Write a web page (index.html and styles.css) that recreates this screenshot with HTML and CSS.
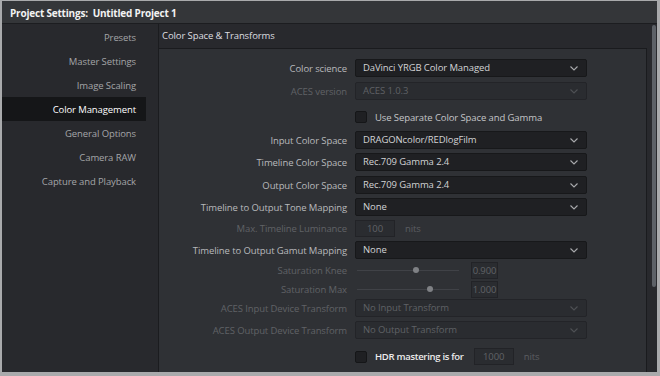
FILE: index.html
```html
<!DOCTYPE html>
<html>
<head>
<meta charset="utf-8">
<link rel="stylesheet" href="styles.css">
</head>
<body>
<div class="window">
  <div class="titlebar">Project Settings:&nbsp; Untitled Project 1</div>
  <div class="body">
    <nav class="sidebar">
      <div class="nav-item">Presets</div>
      <div class="nav-item">Master Settings</div>
      <div class="nav-item">Image Scaling</div>
      <div class="nav-item active">Color Management</div>
      <div class="nav-item">General Options</div>
      <div class="nav-item">Camera RAW</div>
      <div class="nav-item">Capture and Playback</div>
    </nav>
    <div class="main">
      <div class="main-col">
        <div class="section-head">Color Space &amp; Transforms</div>
        <div class="panel">
          <div class="row r-first">
            <span class="lbl">Color science</span>
            <div class="select">DaVinci YRGB Color Managed<svg class="chev" viewBox="0 0 8 5"><path d="M0.5 0.5 L4 4 L7.5 0.5"/></svg></div>
          </div>
          <div class="row r-gap5 off">
            <span class="lbl">ACES version</span>
            <div class="select">ACES 1.0.3<svg class="chev" viewBox="0 0 8 5"><path d="M0.5 0.5 L4 4 L7.5 0.5"/></svg></div>
          </div>
          <div class="row r-check">
            <span class="lbl"></span>
            <div class="check-line"><span class="box"></span><span class="check-text">Use Separate Color Space and Gamma</span></div>
          </div>
          <div class="row r-gap5">
            <span class="lbl">Input Color Space</span>
            <div class="select">DRAGONcolor/REDlogFilm<svg class="chev" viewBox="0 0 8 5"><path d="M0.5 0.5 L4 4 L7.5 0.5"/></svg></div>
          </div>
          <div class="row">
            <span class="lbl">Timeline Color Space</span>
            <div class="select">Rec.709 Gamma 2.4<svg class="chev" viewBox="0 0 8 5"><path d="M0.5 0.5 L4 4 L7.5 0.5"/></svg></div>
          </div>
          <div class="row r-gap5">
            <span class="lbl">Output Color Space</span>
            <div class="select">Rec.709 Gamma 2.4<svg class="chev" viewBox="0 0 8 5"><path d="M0.5 0.5 L4 4 L7.5 0.5"/></svg></div>
          </div>
          <div class="row">
            <span class="lbl">Timeline to Output Tone Mapping</span>
            <div class="select">None<svg class="chev" viewBox="0 0 8 5"><path d="M0.5 0.5 L4 4 L7.5 0.5"/></svg></div>
          </div>
          <div class="row r-short off">
            <span class="lbl">Max. Timeline Luminance</span>
            <div class="inline"><span class="field f-lum">100</span><span class="unit">nits</span></div>
          </div>
          <div class="row">
            <span class="lbl">Timeline to Output Gamut Mapping</span>
            <div class="select">None<svg class="chev" viewBox="0 0 8 5"><path d="M0.5 0.5 L4 4 L7.5 0.5"/></svg></div>
          </div>
          <div class="row r-short r-gap3 off">
            <span class="lbl">Saturation Knee</span>
            <div class="inline"><span class="slider"><span class="knob" style="left:59px"></span></span><span class="field f-val">0.900</span></div>
          </div>
          <div class="row r-short r-gap2 off">
            <span class="lbl">Saturation Max</span>
            <div class="inline"><span class="slider"><span class="knob" style="left:73px"></span></span><span class="field f-val">1.000</span></div>
          </div>
          <div class="row r-gap1 off">
            <span class="lbl">ACES Input Device Transform</span>
            <div class="select">No Input Transform<svg class="chev" viewBox="0 0 8 5"><path d="M0.5 0.5 L4 4 L7.5 0.5"/></svg></div>
          </div>
          <div class="row off">
            <span class="lbl">ACES Output Device Transform</span>
            <div class="select">No Output Transform<svg class="chev" viewBox="0 0 8 5"><path d="M0.5 0.5 L4 4 L7.5 0.5"/></svg></div>
          </div>
          <div class="row r-short r-gap9">
            <span class="lbl"></span>
            <div class="check-line"><span class="box"></span><span class="check-text hdr">HDR mastering is for</span><span class="field f-hdr">1000</span><span class="unit">nits</span></div>
          </div>
        </div>
      </div>
      <div class="gutter"><div class="thumb"></div></div>
    </div>
  </div>
</div>
</body>
</html>
```

FILE: styles.css
```css
* { box-sizing: border-box; }
html, body { margin: 0; padding: 0; background: #b4b4b4; }
body {
  font-family: "Open Sans", "Noto Sans", sans-serif;
  font-size: 9.5px;
  letter-spacing: -0.1px;
}
.window {
  width: 660px;
  height: 376px;
  display: flex;
  flex-direction: column;
  border-style: solid;
  border-color: #a9aaac;
  border-width: 1px 3px 4px 2px;
  background: #28292d;
  overflow: hidden;
}
.titlebar {
  height: 23px;
  flex: none;
  background: #343639;
  border-bottom: 1px solid #1c1d20;
  color: #f2f2f2;
  font-weight: 700;
  font-size: 10px;
  letter-spacing: -0.2px;
  padding-top: 2px;
  line-height: 20px;
  padding-left: 8px;
}
.body {
  flex: 1;
  display: flex;
  min-height: 0;
}
.sidebar {
  width: 157px;
  flex: none;
  background: #28292d;
  border-right: 1px solid #1b1c1f;
  padding: 1px 12px 0 0;
}
.nav-item {
  height: 24px;
  line-height: 25px;
  text-align: right;
  padding-right: 10px;
  color: #a4a5a8;
}
.nav-item.active {
  background: #151618;
  color: #ffffff;
}
.main {
  flex: 1;
  display: flex;
  min-width: 0;
}
.main-col {
  width: 488px;
  flex: none;
  display: flex;
  flex-direction: column;
}
.section-head {
  height: 24px;
  flex: none;
  line-height: 24px;
  padding-left: 3px;
  color: #dedfe0;
  background: #28292d;
}
.panel {
  flex: 1;
  background: #2f3135;
  border-top: 1px solid #1a1b1e;
  border-right: 1px solid #1a1b1e;
  padding-top: 10px;
  display: flex;
  flex-direction: column;
}
.gutter {
  flex: 1;
  padding: 1px 1px 0 5px;
  background: #28292d;
}
.thumb {
  width: 4px;
  height: 262px;
  background: #5d6167;
  border-radius: 2px;
}
.row {
  display: grid;
  grid-template-columns: 188px 232px;
  column-gap: 8px;
  align-items: center;
  height: 18px;
  margin-top: 4px;
  flex: none;
}
.row.r-first { margin-top: 0; }
.row.r-gap5 { margin-top: 5px; }
.row.r-gap3 { margin-top: 3px; }
.row.r-gap2 { margin-top: 2px; }
.row.r-gap1 { margin-top: 1px; }
.row.r-gap9 { margin-top: 9px; }
.row.r-check { margin-top: 8px; }
.row.r-short { height: 17px; }
.lbl {
  text-align: right;
  color: #b8b9bc;
  white-space: nowrap;
}
.off .lbl { color: #606266; }
.select {
  height: 18px;
  background: #1f2023;
  border: 1px solid #17181a;
  border-radius: 2px;
  color: #d2d3d5;
  padding-left: 7px;
  line-height: 16px;
  display: flex;
  align-items: center;
  justify-content: space-between;
  padding-right: 8px;
  white-space: nowrap;
}
.off .select {
  background: #2a2c30;
  border-color: #232428;
  color: #5f6165;
}
.chev {
  width: 8px;
  height: 5px;
  fill: none;
  stroke: #a9aaad;
  stroke-width: 1.1;
}
.off .chev { stroke: #4f5155; }
.check-line {
  display: flex;
  align-items: center;
  height: 17px;
}
.box {
  width: 12px;
  height: 12px;
  background: #1f2023;
  border: 1px solid #151618;
  border-radius: 2px;
  flex: none;
}
.check-text {
  margin-left: 8px;
  color: #c4c5c8;
}
.check-text.hdr {
  color: #ececec;
  font-weight: 600;
  letter-spacing: -0.3px;
}
.inline {
  display: flex;
  align-items: center;
  height: 17px;
}
.field {
  height: 17px;
  line-height: 15px;
  text-align: center;
  background: #2a2c30;
  border: 1px solid #222327;
  color: #606266;
  flex: none;
}
.f-lum { width: 40px; }
.f-val { width: 27px; margin-left: 12px; }
.f-hdr { width: 40px; margin-left: 10px; }
.unit {
  margin-left: 10px;
  color: #5c5e62;
}
.slider {
  position: relative;
  width: 102px;
  height: 1px;
  margin-left: 2px;
  background: #404247;
}
.knob {
  position: absolute;
  top: -3px;
  width: 6px;
  height: 6px;
  margin-left: -3px;
  border-radius: 50%;
  background: #7f8185;
}
```
